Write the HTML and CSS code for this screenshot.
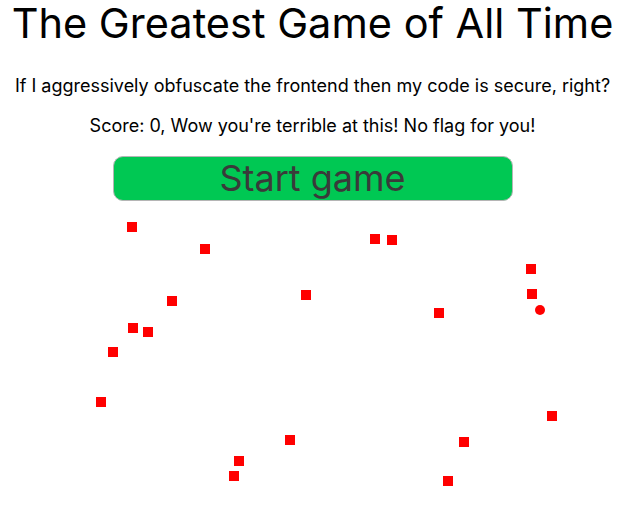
FILE: index.html
```html
<!DOCTYPE html>
<html>
<head>
<meta charset="utf-8">
<link rel="stylesheet" href="styles.css">
</head>
<body>
<main class="page">
  <h1 class="title">The Greatest Game of All Time</h1>
  <p class="text">If I aggressively obfuscate the frontend then my code is secure, right?</p>
  <p class="text">Score: 0, Wow you're terrible at this! No flag for you!</p>
  <button class="start">Start game</button>
  <div class="board">
    <span class="block" style="left:127px;top:21px"></span>
    <span class="block" style="left:200px;top:43px"></span>
    <span class="block" style="left:167px;top:95px"></span>
    <span class="block" style="left:301px;top:89px"></span>
    <span class="block" style="left:128px;top:122px"></span>
    <span class="block" style="left:143px;top:126px"></span>
    <span class="block" style="left:108px;top:146px"></span>
    <span class="block" style="left:370px;top:33px"></span>
    <span class="block" style="left:387px;top:34px"></span>
    <span class="block" style="left:526px;top:63px"></span>
    <span class="block" style="left:527px;top:88px"></span>
    <span class="block" style="left:434px;top:107px"></span>
    <span class="block" style="left:96px;top:196px"></span>
    <span class="block" style="left:547px;top:210px"></span>
    <span class="block" style="left:285px;top:234px"></span>
    <span class="block" style="left:459px;top:236px"></span>
    <span class="block" style="left:234px;top:255px"></span>
    <span class="block" style="left:229px;top:270px"></span>
    <span class="block" style="left:443px;top:275px"></span>
    <span class="player" style="left:535px;top:104px"></span>
  </div>
</main>
</body>
</html>
```
FILE: styles.css
```css
html, body {
  margin: 0;
  padding: 0;
  background: #fff;
}
.page {
  font-family: Inter, "Noto Sans", sans-serif;
  color: #000;
  text-align: center;
  display: flex;
  flex-direction: column;
  align-items: center;
}
.title {
  font-size: 41.5px;
  font-weight: 400;
  line-height: 46px;
  margin: 0;
  white-space: nowrap;
}
.text {
  font-size: 18px;
  line-height: 24px;
  margin: 28px 0 0 0;
  white-space: nowrap;
}
.text + .text {
  margin-top: 16px;
}
.start {
  margin-top: 18px;
  width: 400px;
  height: 45px;
  background: #00c853;
  border: 1px solid #b5b5b5;
  border-radius: 10px;
  font-family: Inter, "Noto Sans", sans-serif;
  font-size: 36px;
  color: #3a3a3a;
  padding: 0;
  line-height: 43px;
}
.board {
  position: relative;
  width: 625px;
  height: 320px;
}
.block {
  position: absolute;
  width: 10px;
  height: 10px;
  background: #ff0000;
}
.player {
  position: absolute;
  width: 10px;
  height: 10px;
  border-radius: 50%;
  background: #ff0000;
}
```
